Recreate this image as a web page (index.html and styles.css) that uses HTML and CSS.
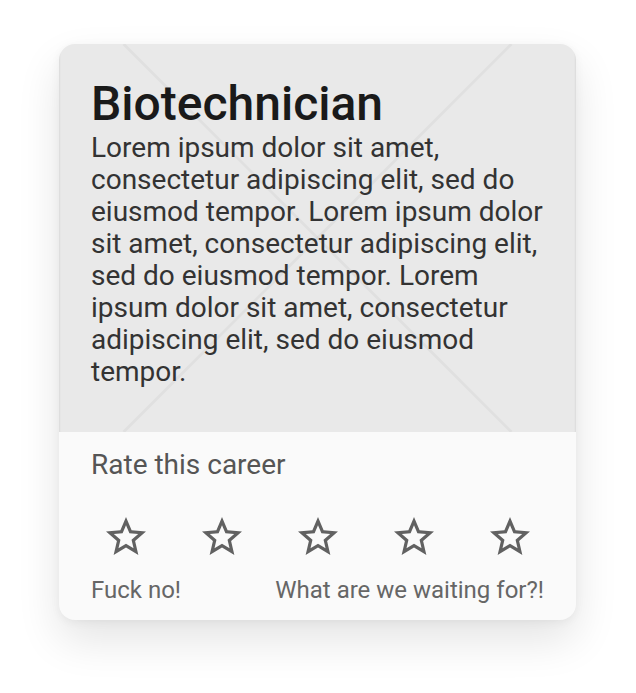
FILE: index.html
```html
<!DOCTYPE html>
<html lang="en">
<head>
<meta charset="utf-8">
<title>Career card</title>
<link rel="stylesheet" href="styles.css">
</head>
<body>
<main class="page">
  <article class="card">
    <section class="media">
      <svg class="placeholder" viewBox="0 0 388 388" preserveAspectRatio="xMidYMid meet" aria-hidden="true">
        <line x1="0" y1="0" x2="388" y2="388"/>
        <line x1="388" y1="0" x2="0" y2="388"/>
      </svg>
      <div class="media-content">
        <h1 class="title">Biotechnician</h1>
        <p class="desc">Lorem ipsum dolor sit amet, consectetur adipiscing elit, sed do eiusmod tempor. Lorem ipsum dolor sit amet, consectetur adipiscing elit, sed do eiusmod tempor. Lorem ipsum dolor sit amet, consectetur adipiscing elit, sed do eiusmod tempor.</p>
      </div>
    </section>
    <section class="rating">
      <div class="rating-label">Rate this career</div>
      <div class="stars">
        <button class="star" aria-label="1 star"><svg viewBox="0 0 24 24"><path d="M22 9.24l-7.19-.62L12 2 9.19 8.63 2 9.24l5.46 4.73L5.82 21 12 17.27 18.18 21l-1.63-7.03L22 9.24zM12 15.4l-3.76 2.27 1-4.28-3.32-2.88 4.38-.38L12 6.1l1.71 4.04 4.38.38-3.32 2.88 1 4.28L12 15.4z"/></svg></button>
        <button class="star" aria-label="2 stars"><svg viewBox="0 0 24 24"><path d="M22 9.24l-7.19-.62L12 2 9.19 8.63 2 9.24l5.46 4.73L5.82 21 12 17.27 18.18 21l-1.63-7.03L22 9.24zM12 15.4l-3.76 2.27 1-4.28-3.32-2.88 4.38-.38L12 6.1l1.71 4.04 4.38.38-3.32 2.88 1 4.28L12 15.4z"/></svg></button>
        <button class="star" aria-label="3 stars"><svg viewBox="0 0 24 24"><path d="M22 9.24l-7.19-.62L12 2 9.19 8.63 2 9.24l5.46 4.73L5.82 21 12 17.27 18.18 21l-1.63-7.03L22 9.24zM12 15.4l-3.76 2.27 1-4.28-3.32-2.88 4.38-.38L12 6.1l1.71 4.04 4.38.38-3.32 2.88 1 4.28L12 15.4z"/></svg></button>
        <button class="star" aria-label="4 stars"><svg viewBox="0 0 24 24"><path d="M22 9.24l-7.19-.62L12 2 9.19 8.63 2 9.24l5.46 4.73L5.82 21 12 17.27 18.18 21l-1.63-7.03L22 9.24zM12 15.4l-3.76 2.27 1-4.28-3.32-2.88 4.38-.38L12 6.1l1.71 4.04 4.38.38-3.32 2.88 1 4.28L12 15.4z"/></svg></button>
        <button class="star" aria-label="5 stars"><svg viewBox="0 0 24 24"><path d="M22 9.24l-7.19-.62L12 2 9.19 8.63 2 9.24l5.46 4.73L5.82 21 12 17.27 18.18 21l-1.63-7.03L22 9.24zM12 15.4l-3.76 2.27 1-4.28-3.32-2.88 4.38-.38L12 6.1l1.71 4.04 4.38.38-3.32 2.88 1 4.28L12 15.4z"/></svg></button>
      </div>
      <div class="scale">
        <span>Fuck no!</span>
        <span>What are we waiting for?!</span>
      </div>
    </section>
  </article>
</main>
</body>
</html>
```

FILE: styles.css
```css
* { box-sizing: border-box; }
html, body { margin: 0; padding: 0; background: #ffffff; }
body { font-family: Roboto, "Liberation Sans", sans-serif; min-height: 100vh; }

.page {
  display: flex;
  justify-content: flex-start;
  align-items: flex-start;
  padding: 44px 0 80px 59px;
  min-height: 100vh;
}

.card {
  width: 517px;
  border-radius: 16px;
  overflow: hidden;
  background: #fafafa;
  box-shadow: 0 20px 44px rgba(0, 0, 0, 0.11), 0 2px 10px rgba(0, 0, 0, 0.05);
}

.media {
  position: relative;
  background: #e9e9e9;
  padding: 32px 32px 44px;
  box-shadow: inset 2px 0 2px -1px rgba(0,0,0,0.06), inset -2px 0 2px -1px rgba(0,0,0,0.06);
}

.placeholder {
  position: absolute;
  inset: 0;
  width: 100%;
  height: 100%;
}
.placeholder line {
  stroke: rgba(0, 0, 0, 0.035);
  stroke-width: 3;
}

.media-content { position: relative; }

.title {
  margin: 0;
  font-size: 48px;
  line-height: 56px;
  font-weight: 500;
  color: #1a1a1a;
}

.desc {
  margin: 0;
  font-size: 28px;
  line-height: 32px;
  color: #333333;
}

.rating {
  padding: 17px 32px 16px;
}

.rating-label {
  font-size: 28px;
  line-height: 32px;
  color: #555555;
}

.stars {
  display: flex;
  justify-content: center;
  gap: 48px;
  margin-top: 32px;
}

.star {
  width: 48px;
  height: 48px;
  padding: 0;
  border: 0;
  background: none;
  display: block;
}
.star svg { width: 48px; height: 48px; display: block; fill: #616161; }

.scale {
  display: flex;
  justify-content: space-between;
  margin-top: 15px;
  font-size: 24px;
  line-height: 28px;
  color: #666666;
}
```
